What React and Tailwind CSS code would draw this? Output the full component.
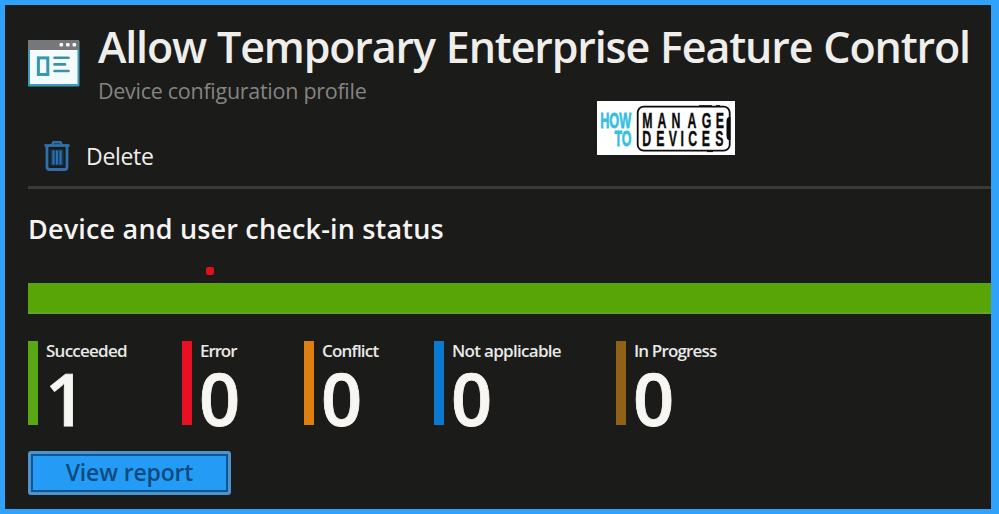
import { twMerge } from 'tailwind-merge';

const statuses = [
  { label: 'Succeeded', count: 1, bar: 'bg-[#5aa816]', width: 'w-[154px]', tracking: 'tracking-[-0.75px]' },
  { label: 'Error', count: 0, bar: 'bg-[#e81123]', width: 'w-[122px]', tracking: 'tracking-[-1.1px]' },
  { label: 'Conflict', count: 0, bar: 'bg-[#de8011]', width: 'w-[130px]', tracking: 'tracking-[-0.8px]' },
  { label: 'Not applicable', count: 0, bar: 'bg-[#0a7ad1]', width: 'w-[182px]', tracking: 'tracking-[-0.7px]' },
  { label: 'In Progress', count: 0, bar: 'bg-[#8f6218]', width: 'w-[150px]', tracking: 'tracking-[-0.85px]' },
];

function ProfileIcon() {
  return (
    <svg className="block w-[54px] h-[50px]" viewBox="0 0 54 50">
      <rect x="0" y="1.5" width="51.5" height="46" rx="1" fill="#3b9dbb" />
      <rect x="0" y="1" width="51" height="10" fill="#76777a" />
      <rect x="2" y="11" width="47.5" height="34" fill="#f3fbfd" />
      <rect x="31.5" y="4" width="3.6" height="3.6" rx="1" fill="#f4f4f4" />
      <rect x="38" y="4" width="3.6" height="3.6" rx="1" fill="#f4f4f4" />
      <rect x="44.5" y="4" width="3.6" height="3.6" rx="1" fill="#f4f4f4" />
      <rect x="10.4" y="18.9" width="9.4" height="16.6" fill="#f3fbfd" stroke="#3596b6" strokeWidth="3" />
      <path d="M26.5 18.8H40.5M26.5 25.4H37M26.5 32H40.5" stroke="#3f8fa8" strokeWidth="2.6" strokeLinecap="round" />
    </svg>
  );
}

function TrashIcon() {
  return (
    <svg className="block w-[26px] h-[32px]" viewBox="0 0 26 32" fill="none" stroke="#2f70aa">
      <path d="M0.5 5.5H25.5" strokeWidth="2.8" />
      <path d="M8 5L9.5 2.2H16.5L18 5" strokeWidth="2.4" />
      <path d="M3 6V27Q3 29.5 5.5 29.5H20.5Q23 29.5 23 27V6" strokeWidth="2.8" />
      <rect x="6.5" y="9.5" width="13" height="16" fill="#123a5e" stroke="none" />
      <path d="M9.5 10.5V24.5M13 10.5V24.5M16.5 10.5V24.5" strokeWidth="2.1" />
    </svg>
  );
}

function Logo() {
  return (
    <svg
      className="block w-[138px] h-[54px] bg-white"
      viewBox="0 0 138 54"
      fontFamily="'Liberation Sans Narrow', 'Liberation Sans', sans-serif"
      fontWeight="700"
    >
      <g fill="#35bfe3" stroke="#35bfe3" strokeWidth="0.8">
        <text x="3.2" y="26.5" fontSize="22.5" textLength="31" lengthAdjust="spacingAndGlyphs">HOW</text>
        <text x="17.5" y="45" fontSize="22.5" textLength="17" lengthAdjust="spacingAndGlyphs">TO</text>
      </g>
      <rect x="40.7" y="5.7" width="92" height="44" rx="6" fill="none" stroke="#0b0b0b" strokeWidth="1.8" />
      <path d="M102 4.7H115M119 4.7H123M110 50.6H116" stroke="#0b0b0b" strokeWidth="1" />
      <path d="M133.5 16H131.5Q129.5 17 129.5 20V35Q129.5 38 131.5 39H133.5Z" fill="#0b0b0b" />
      <g fill="#0b0b0b" stroke="#0b0b0b" strokeWidth="0.4">
        <text transform="translate(0 26.5) scale(0.56 1)" x="81 108 133 161.5 187 212" y="0" fontSize="22">MANAGE</text>
        <text transform="translate(0 45) scale(0.56 1)" x="81 106 128 149 163 187 211" y="0" fontSize="22">DEVICES</text>
      </g>
    </svg>
  );
}

function StatusItem({ label, count, bar, width, tracking }) {
  return (
    <div className={twMerge('flex h-[84px]', width)}>
      <div className={twMerge('w-[10px] h-full shrink-0', bar)} />
      <div className="pl-2">
        <div className={twMerge('text-[17px] leading-[20px] font-semibold whitespace-nowrap text-[#e9e9e7]', tracking)}>
          {label}
        </div>
        <div className="-ml-px text-[72px] leading-[74px] font-semibold text-[#f7f6f3] [-webkit-text-stroke:0.8px_#f7f6f3]">
          {count}
        </div>
      </div>
    </div>
  );
}

export default function App() {
  return (
    <div className="relative w-[999px] h-[514px] overflow-hidden bg-[#1b1b19] border-[5px] border-r-[8px] border-[#2fa3fc] pl-[23px] font-['Open_Sans','Noto_Sans',sans-serif]">
      {/* title */}
      <header className="flex h-[110px]">
        <div className="w-[70px] pt-[34px] shrink-0">
          <ProfileIcon />
        </div>
        <div className="pt-[16px]">
          <h1 className="text-[43px] leading-[52px] font-semibold whitespace-nowrap tracking-[-1.15px] [word-spacing:1px] text-[#efeeea]">
            Allow Temporary Enterprise Feature Control
          </h1>
          <p className="text-[21.5px] leading-[36px] whitespace-nowrap tracking-[-0.28px] text-[#858483]">
            Device configuration profile
          </p>
        </div>
      </header>

      {/* toolbar */}
      <div className="flex items-center h-[74px] pl-4 pt-[10px] border-b-[3px] border-[#3b3a39]">
        <button className="flex items-center gap-4">
          <TrashIcon />
          <span className="text-[23px] leading-[32px] tracking-[-0.3px] text-[#efeeec]">Delete</span>
        </button>
      </div>

      <h2 className="h-[94px] pt-[21px] text-[27px] leading-[38px] font-semibold whitespace-nowrap tracking-[0.18px] text-[#f5f4f2]">
        Device and user check-in status
      </h2>
      <div className="h-[31px] bg-[#58a508] border-b-2 border-[#62a52b]" />

      <div className="flex pt-[27px]">
        {statuses.map((status) => (
          <StatusItem key={status.label} {...status} />
        ))}
      </div>

      <button className="mt-[26px] w-[203px] h-[44px] rounded-[3px] border-[3px] border-[#4f93cb] bg-[#249cf6] text-[23px] leading-[34px] pb-[3px] tracking-[-0.15px] font-semibold text-[#0f4a7e] flex items-center justify-center shadow-[inset_0_0_0_2px_#0e5594]">
        View report
      </button>

      <div className="absolute left-[592px] top-[96px]">
        <Logo />
      </div>
      <div className="absolute left-[201px] top-[262px] w-[8px] h-[8px] rounded-[2px] bg-[#df1018]" />
    </div>
  );
}
